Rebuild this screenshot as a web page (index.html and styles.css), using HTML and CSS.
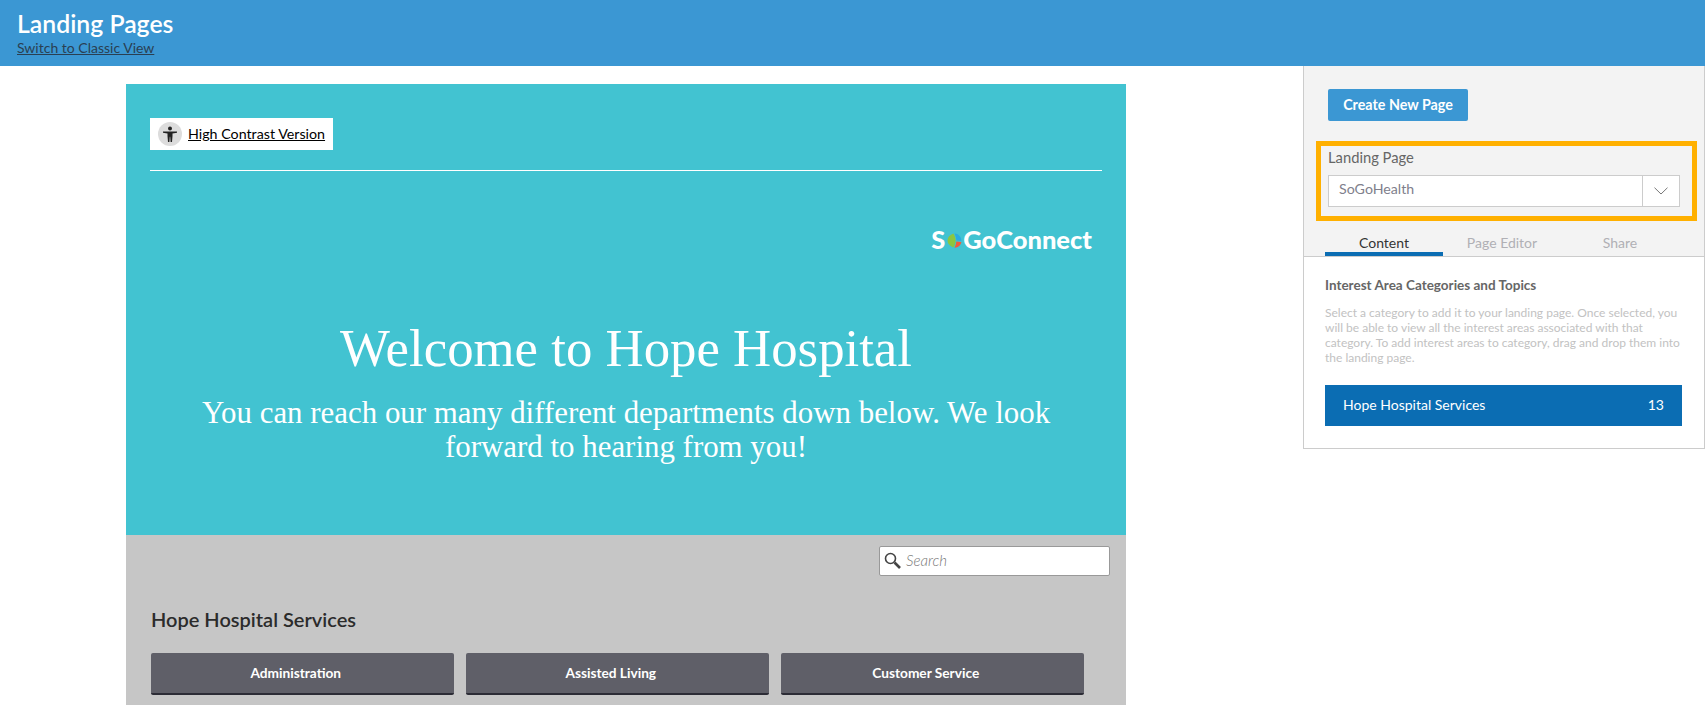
FILE: index.html
```html
<!DOCTYPE html>
<html lang="en">
<head>
    <meta charset="UTF-8">
    <meta name="viewport" content="width=device-width, initial-scale=1.0">
    <title>Landing Pages</title>
    <link rel="stylesheet" href="styles.css">
</head>
<body>
    <header class="top-bar">
        <h1>Landing Pages</h1>
        <a href="#" class="classic-link">Switch to Classic View</a>
    </header>

    <div class="main">
        <section class="preview">
            <div class="hero">
                <div class="contrast-row">
                    <div class="contrast-box">
                        <svg class="contrast-icon" width="24" height="24" viewBox="0 0 24 24">
                            <circle cx="12" cy="12" r="12" fill="#dcdcdc"/>
                            <circle cx="12" cy="6.600" r="2" fill="#222"/>
                            <path d="M5 9.500h14v1.200l-4.500.7V14l-.5 6h-1.400l-.4-5.200h-.4l-.4 5.200h-1.400l-.5-6v-2.600l-4.500-.7z" fill="#222"/>
                        </svg>
                        <a href="#">High Contrast Version</a>
                    </div>
                </div>
                <div class="logo">
                    <span>S</span>
                    <svg class="logo-ball" width="17" height="17" viewBox="0 0 16 16">
                        <path d="M7 1.500C3 3 1.500 5.500 1.500 8S3 13 7 14.500C8.500 12 9 10 9 8S8.500 4 7 1.500z" fill="#8cc63f"/>
                        <path d="M8 1.500C11.500 1.500 14.500 4.500 14.500 8.500L9.700 8C9.700 6 9 3.500 8 1.500z" fill="#29abe2"/>
                        <path d="M14.500 9.500C14 12.500 11 15 8 14.800C9 13 9.500 11.500 9.700 9z" fill="#f15a3c"/>
                    </svg>
                    <span>GoConnect</span>
                </div>
                <h2 class="hero-title">Welcome to Hope Hospital</h2>
                <p class="hero-text">You can reach our many different departments down below. We look forward to hearing from you!</p>
            </div>

            <div class="services">
                <div class="search-row">
                    <div class="search-box">
                        <svg width="17" height="17" viewBox="0 0 17 17" fill="none" stroke="#444">
                            <circle cx="6.500" cy="6.500" r="5" stroke-width="1.600"/>
                            <path d="M10.500 10.500l5.500 5.500" stroke-width="2.600"/>
                        </svg>
                        <span>Search</span>
                    </div>
                </div>
                <h3>Hope Hospital Services</h3>
                <div class="service-grid">
                    <a href="#" class="service-btn">Administration</a>
                    <a href="#" class="service-btn">Assisted Living</a>
                    <a href="#" class="service-btn">Customer Service</a>
                </div>
            </div>
        </section>

        <aside class="sidebar">
            <div class="sidebar-top">
                <button type="button" class="create-btn">Create New Page</button>
                <div class="page-picker">
                    <label>Landing Page</label>
                    <div class="select">
                        <span class="select-value">SoGoHealth</span>
                        <span class="select-arrow">
                            <svg width="14" height="8" viewBox="0 0 14 8" fill="none" stroke="#777" stroke-width="1">
                                <path d="M.5.700L7 7l6.500-6.300"/>
                            </svg>
                        </span>
                    </div>
                </div>
                <div class="tabs">
                    <div class="tab active">Content</div>
                    <div class="tab">Page Editor</div>
                    <div class="tab">Share</div>
                </div>
            </div>
            <div class="sidebar-body">
                <h4>Interest Area Categories and Topics</h4>
                <p>Select a category to add it to your landing page. Once selected, you will be able to view all the interest areas associated with that category. To add interest areas to category, drag and drop them into the landing page.</p>
                <div class="category-row">
                    <span>Hope Hospital Services</span>
                    <span>13</span>
                </div>
            </div>
        </aside>
    </div>
</body>
</html>
```

FILE: styles.css
```css
/* Global Styles */
* {
    box-sizing: border-box;
}

body {
    font-family: Lato, Arial, sans-serif;
    margin: 0;
    padding: 0;
    background-color: #fff;
}

/* Top bar */
.top-bar {
    height: 66px;
    padding: 10px 17px 0;
    background-color: #3b97d3;
}

.top-bar h1 {
    margin: 0;
    font-size: 24.800px;
    line-height: 27px;
    font-weight: 600;
    color: #fff;
}

.classic-link {
    display: block;
    width: fit-content;
    margin-top: 3px;
    font-size: 14px;
    line-height: 16px;
    color: #2a3f52;
}

.main {
    display: flex;
    align-items: flex-start;
    justify-content: space-between;
    padding-left: 126px;
}

/* Landing page preview */
.preview {
    width: 1000px;
    margin-top: 18px;
}

.hero {
    height: 451px;
    padding: 34px 24px 0;
    background-color: #42c3d1;
    text-align: center;
}

.contrast-row {
    padding-bottom: 20px;
    border-bottom: 1px solid #fff;
}

.contrast-box {
    display: flex;
    align-items: center;
    gap: 6px;
    width: 183px;
    height: 32px;
    padding-left: 8px;
    background-color: #fff;
    font-size: 14.250px;
}

.contrast-box a {
    margin-top: -2px;
    color: #000;
}

.logo {
    display: flex;
    align-items: center;
    justify-content: flex-end;
    height: 24px;
    margin: 56px 10px 0 0;
    font-size: 25.500px;
    font-weight: 900;
    color: #fff;
}

.logo-ball {
    margin: 2px 0 0 1px;
}

.hero-title {
    margin: 65px 0 0;
    font-family: "Liberation Serif", serif;
    font-size: 52.800px;
    line-height: 64px;
    font-weight: 400;
    color: #fff;
}

.hero-text {
    width: 860px;
    margin: 16px auto 0;
    font-family: "Liberation Serif", serif;
    font-size: 30.900px;
    line-height: 34px;
    color: #fff;
}

.services {
    height: 170px;
    padding: 11px 16px 0 25px;
    background-color: #c6c6c6;
}

.search-row {
    display: flex;
    justify-content: flex-end;
}

.search-box {
    display: flex;
    align-items: center;
    gap: 5px;
    width: 231px;
    height: 30px;
    padding: 0 0 2px 4px;
    background-color: #fff;
    border: 1px solid #999;
    border-radius: 2px;
    font-size: 15px;
    font-style: italic;
    font-weight: 300;
    color: #777;
}

.services h3 {
    margin: 30px 0 0;
    font-size: 20px;
    line-height: 26px;
    font-weight: 600;
    color: #2b2b2b;
}

.service-grid {
    display: grid;
    grid-template-columns: repeat(3, 302.500px);
    gap: 12.500px;
    margin-top: 21px;
}

.service-btn {
    display: block;
    height: 42px;
    padding-right: 13px;
    line-height: 39px;
    background-color: #5f5f68;
    border-bottom: 2px solid #2c2c36;
    border-radius: 2px;
    font-size: 13.700px;
    font-weight: 700;
    text-align: center;
    text-decoration: none;
    color: #fff;
}

/* Sidebar */
.sidebar {
    width: 402px;
    height: 383px;
    background-color: #fff;
    border: 1px solid #ccc;
    border-top: none;
}

.sidebar-top {
    height: 191px;
    padding: 23px 0 0 12px;
    background-color: #f3f3f3;
    border-bottom: 1px solid #ccc;
}

.create-btn {
    display: block;
    width: 140px;
    height: 32px;
    margin-left: 12px;
    padding: 0 0 2px;
    background-color: #3b97d3;
    border: none;
    border-radius: 2px;
    font-family: inherit;
    font-size: 14.300px;
    font-weight: 700;
    color: #fff;
}

.page-picker {
    width: 381px;
    height: 80px;
    margin-top: 20px;
    padding: 2px 7px 0;
    border: 5px solid #ffb000;
}

.page-picker label {
    display: block;
    font-size: 14.750px;
    line-height: 19px;
    color: #666;
}

.select {
    display: flex;
    width: 352px;
    height: 32px;
    margin-top: 8px;
    background-color: #fff;
    border: 1px solid #ccc;
}

.select-value {
    flex: 1;
    padding-left: 10px;
    font-size: 14.200px;
    line-height: 26px;
    color: #80808c;
}

.select-arrow {
    display: flex;
    align-items: center;
    justify-content: center;
    width: 37px;
    border-left: 1px solid #ccc;
}

.tabs {
    display: flex;
    margin: 11px 0 0 9px;
}

.tab {
    width: 118px;
    height: 24px;
    font-size: 14px;
    line-height: 22px;
    text-align: center;
    color: #b0b0b5;
}

.tab.active {
    border-bottom: 4px solid #0b6db3;
    color: #333;
}

.sidebar-body {
    padding: 19px 22px 0 21px;
}

.sidebar-body h4 {
    margin: 0;
    font-size: 13.500px;
    line-height: 19px;
    font-weight: 700;
    color: #666;
}

.sidebar-body p {
    margin: 10px 0 0;
    font-size: 12px;
    line-height: 15px;
    color: #c2c2c2;
}

.category-row {
    display: flex;
    justify-content: space-between;
    height: 41px;
    margin: 20px 0 0;
    padding: 0 18px;
    background-color: #0b6db3;
    font-size: 14px;
    line-height: 40px;
    color: #fff;
}
```
